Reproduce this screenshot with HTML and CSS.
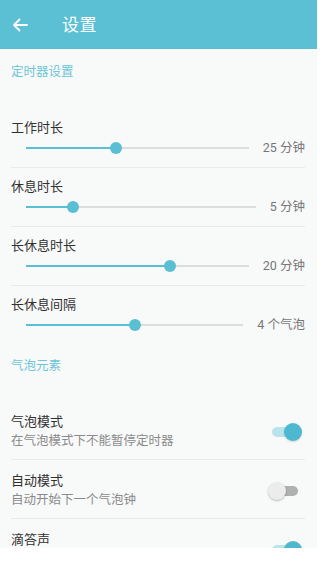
FILE: index.html
```html
<!DOCTYPE html>
<html lang="zh">
<head>
<meta charset="utf-8">
<link rel="stylesheet" href="styles.css">
</head>
<body>
<div class="screen">
  <header class="appbar">
    <svg class="back" width="16" height="14" viewBox="0 0 16 14"><path d="M15 7H2M7.5 1.5L2 7l5.5 5.5" fill="none" stroke="#fff" stroke-width="1.8" stroke-linecap="round" stroke-linejoin="round"/></svg>
    <span class="title">设置</span>
  </header>

  <div class="section s1">定时器设置</div>

  <div class="srow">
    <div class="label">工作时长</div>
    <div class="slider-line">
      <div class="track"><div class="fill" style="width:40.5%"></div><div class="thumb" style="left:40.5%"></div></div>
      <span class="val">25 分钟</span>
    </div>
  </div>
  <div class="srow">
    <div class="label">休息时长</div>
    <div class="slider-line">
      <div class="track"><div class="fill" style="width:20.5%"></div><div class="thumb" style="left:20.5%"></div></div>
      <span class="val">5 分钟</span>
    </div>
  </div>
  <div class="srow">
    <div class="label">长休息时长</div>
    <div class="slider-line">
      <div class="track"><div class="fill" style="width:64.4%"></div><div class="thumb" style="left:64.4%"></div></div>
      <span class="val">20 分钟</span>
    </div>
  </div>
  <div class="srow last">
    <div class="label">长休息间隔</div>
    <div class="slider-line">
      <div class="track"><div class="fill" style="width:50%"></div><div class="thumb" style="left:50%"></div></div>
      <span class="val">4 个气泡</span>
    </div>
  </div>

  <div class="section s2">气泡元素</div>

  <div class="trow">
    <div class="ttext">
      <div class="label">气泡模式</div>
      <div class="sub">在气泡模式下不能暂停定时器</div>
    </div>
    <div class="toggle on"><span class="knob"></span></div>
  </div>
  <div class="trow">
    <div class="ttext">
      <div class="label">自动模式</div>
      <div class="sub">自动开始下一个气泡钟</div>
    </div>
    <div class="toggle off"><span class="knob"></span></div>
  </div>
  <div class="trow">
    <div class="ttext">
      <div class="label">滴答声</div>
      <div class="sub">&nbsp;</div>
    </div>
    <div class="toggle on"><span class="knob"></span></div>
  </div>
</div>
</body>
</html>
```

FILE: styles.css
```css
html, body {
  margin: 0;
  padding: 0;
  background: #ffffff;
}
body {
  font-family: Roboto, "Noto Sans CJK SC", sans-serif;
  width: 320px;
  height: 565px;
  overflow: hidden;
}
.screen {
  width: 317px;
  height: 548px;
  background: #f8f9f9;
  overflow: hidden;
}
.appbar {
  height: 49px;
  background: #5bc0d4;
  display: flex;
  align-items: center;
  box-sizing: border-box;
  padding-left: 12px;
}
.back {
  display: block;
}
.title {
  color: #ffffff;
  font-size: 17px;
  margin-left: 34px;
  line-height: 20px;
  letter-spacing: 0.5px;
}
.section {
  font-size: 12.5px;
  line-height: 16px;
  color: #6cc6d7;
  padding-left: 11px;
}
.s1 {
  padding-top: 15px;
  padding-bottom: 29px;
}
.s2 {
  padding-top: 13px;
  padding-bottom: 27px;
}
.label {
  font-size: 13px;
  line-height: 16px;
  color: #303030;
}
.srow {
  margin: 0 12px 0 11px;
  padding-top: 11px;
  height: 47px;
  border-bottom: 1px solid #e9e9e9;
}
.srow.last {
  border-bottom-color: transparent;
}
.slider-line {
  display: flex;
  align-items: center;
  height: 20px;
  margin-top: 2px;
  padding-left: 15px;
}
.track {
  flex: 1;
  height: 2px;
  background: #dddddd;
  position: relative;
  margin-right: 14px;
}
.fill {
  height: 2px;
  background: #5bbfd3;
}
.thumb {
  position: absolute;
  top: -5px;
  width: 12px;
  height: 12px;
  margin-left: -6px;
  border-radius: 50%;
  background: #5bbfd3;
}
.val {
  font-size: 12.5px;
  color: #777777;
  line-height: 16px;
  white-space: nowrap;
}
.trow {
  margin: 0 12px 0 11px;
  padding-top: 13px;
  height: 45px;
  border-bottom: 1px solid #e9e9e9;
  display: flex;
  justify-content: space-between;
  align-items: flex-start;
}
.sub {
  font-size: 12.5px;
  line-height: 16px;
  color: #8a8a8a;
  margin-top: 3px;
}
.toggle {
  position: relative;
  width: 32px;
  height: 18px;
  margin-top: 9px;
  margin-right: 3px;
}
.toggle::before {
  content: "";
  position: absolute;
  left: 2px;
  right: 4px;
  top: 4px;
  height: 10px;
  border-radius: 5px;
}
.toggle.on::before {
  background: #b9e4ec;
}
.toggle.off::before {
  background: #b0b0b0;
}
.knob {
  position: absolute;
  top: 0;
  width: 18px;
  height: 18px;
  border-radius: 50%;
}
.toggle.on .knob {
  right: 0;
  background: #4db8ce;
  box-shadow: 0 1px 2px rgba(0,0,0,0.15);
}
.toggle.off .knob {
  left: -2px;
  background: #ececec;
  box-shadow: 0 1px 2px rgba(0,0,0,0.25);
}
```
